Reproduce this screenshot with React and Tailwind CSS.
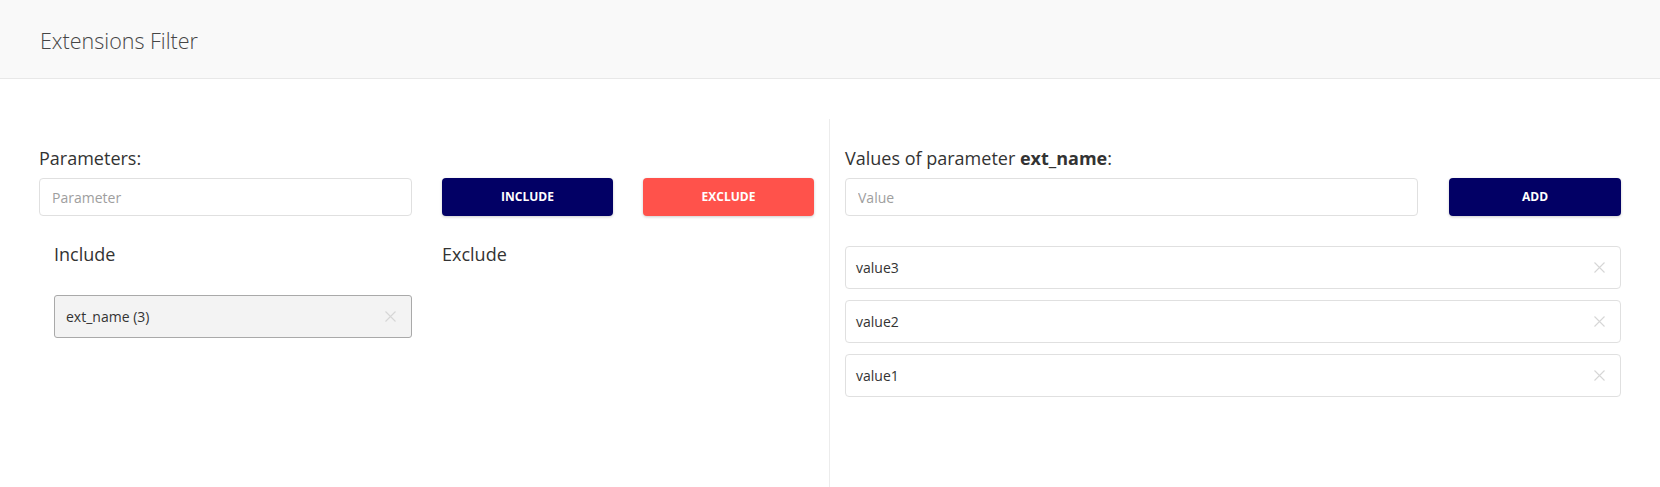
import React, { useState } from "react";

const CloseIcon = () => (
  <svg width="11" height="11" viewBox="0 0 11 11" className="shrink-0">
    <path d="M0.5 0.5L10.5 10.5M10.5 0.5L0.5 10.5" stroke="#d6d6d6" strokeWidth="1.1" />
  </svg>
);

const App = () => {
  const [values] = useState(["value3", "value2", "value1"]);

  return (
    <div className="h-screen bg-white text-[#333] font-['Open_Sans',sans-serif] overflow-hidden flex flex-col">
      {/* Header */}
      <div className="h-[79px] shrink-0 bg-[#f9f9f9] border-b border-[#e8e8e8] flex items-center px-[40px]">
        <h1 className="text-[21.5px] font-light text-[#454545] leading-[23px] mt-[2px]">
          Extensions Filter
        </h1>
      </div>

      <div className="flex flex-1 pt-[40px] pl-[39px] pr-[39px]">
        {/* Left column */}
        <div className="w-[775px] pt-[27px]">
          <div className="text-[18px] leading-[24px] text-[#333] mb-[8px]">
            Parameters:
          </div>
          <div className="flex gap-[30px]">
            <input
              placeholder="Parameter"
              className="w-[373px] h-[38px] border border-[#e0e0e0] rounded-[4px] px-[12px] text-[14px] placeholder:text-[#9e9e9e] outline-none"
            />
            <button className="w-[171px] h-[38px] bg-[#020065] text-white text-[12px] font-bold rounded-[4px] shadow-[0_1px_3px_rgba(0,0,0,0.2)]">
              INCLUDE
            </button>
            <button className="w-[171px] h-[38px] bg-[#ff524b] text-white text-[12px] font-bold rounded-[4px] shadow-[0_1px_3px_rgba(0,0,0,0.2)]">
              EXCLUDE
            </button>
          </div>

          <div className="flex gap-[30px] mt-[26px]">
            <div className="w-[373px] pl-[15px]">
              <div className="text-[18px] leading-[24px] text-[#333]">Include</div>
              <div className="mt-[29px] h-[43px] border border-[#a9a9a9] rounded-[3px] bg-[#f3f3f3] flex items-center justify-between pl-[11px] pr-[15px]">
                <span className="text-[14px] text-[#333]">ext_name (3)</span>
                <CloseIcon />
              </div>
            </div>
            <div className="flex-1">
              <div className="text-[18px] leading-[24px] text-[#333]">Exclude</div>
            </div>
          </div>
        </div>

        {/* Divider */}
        <div className="w-px bg-[#ececec] mx-[15px] self-stretch" />

        {/* Right column */}
        <div className="flex-1 pt-[27px]">
          <div className="text-[18px] leading-[24px] text-[#333] mb-[8px]">
            Values of parameter <span className="font-bold">ext_name</span>:
          </div>
          <div className="flex gap-[31px]">
            <input
              placeholder="Value"
              className="flex-1 h-[38px] border border-[#e0e0e0] rounded-[4px] px-[12px] text-[14px] placeholder:text-[#9e9e9e] outline-none"
            />
            <button className="w-[172px] h-[38px] bg-[#020065] text-white text-[12px] font-bold rounded-[4px] shadow-[0_1px_3px_rgba(0,0,0,0.2)]">
              ADD
            </button>
          </div>
          <div className="mt-[30px] flex flex-col gap-[11px]">
            {values.map((v) => (
              <div
                key={v}
                className="h-[43px] border border-[#e0e0e0] rounded-[4px] flex items-center justify-between pl-[10px] pr-[15px]"
              >
                <span className="text-[14px] text-[#333]">{v}</span>
                <CloseIcon />
              </div>
            ))}
          </div>
        </div>
      </div>
    </div>
  );
};

export default App;
